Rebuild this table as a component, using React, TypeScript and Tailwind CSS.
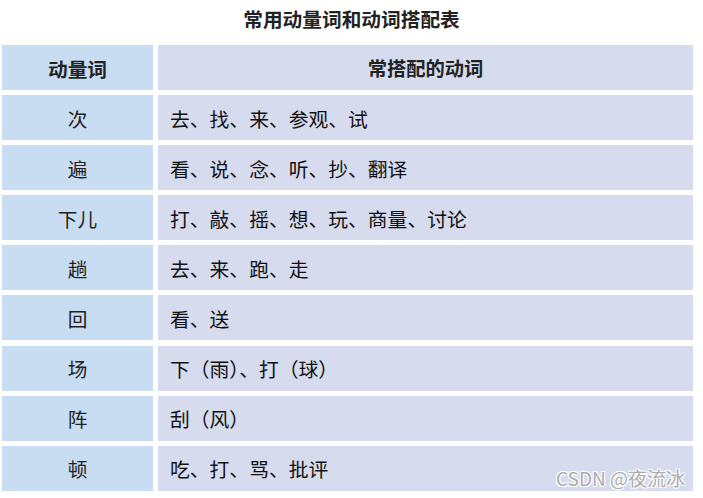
const rows = [
  { measure: '次', verbs: '去、找、来、参观、试' },
  { measure: '遍', verbs: '看、说、念、听、抄、翻译' },
  { measure: '下儿', verbs: '打、敲、摇、想、玩、商量、讨论' },
  { measure: '趟', verbs: '去、来、跑、走' },
  { measure: '回', verbs: '看、送' },
  { measure: '场', verbs: '下（雨）、打（球）' },
  { measure: '阵', verbs: '刮（风）' },
  { measure: '顿', verbs: '吃、打、骂、批评' },
];

const sans = "font-['Noto_Sans_CJK_SC','Noto_Sans',sans-serif]";

export default function App() {
  return (
    <div className={`relative w-[703px] h-[498px] bg-white text-[#1a1a1a] ${sans}`}>
      {/* Title */}
      <div className="h-[45px] pt-[9px] text-center">
        <h1 className="text-[19.7px] leading-none font-bold text-[#222]">常用动量词和动词搭配表</h1>
      </div>

      {/* Table */}
      <div className="pl-[2px] flex flex-col gap-[5.1px]">
        <div className="flex gap-[5px] h-[45px]">
          <div className="w-[151px] bg-[#c9ddf2] flex items-center justify-center pt-[2px]">
            <span className="text-[19.7px] leading-none font-bold text-[#222]">动量词</span>
          </div>
          <div className="w-[535px] bg-[#d6dbee] flex items-center justify-center pt-[2px]">
            <span className="text-[19.3px] leading-none font-bold text-[#222]">常搭配的动词</span>
          </div>
        </div>

        {rows.map((row) => (
          <div key={row.measure} className="flex gap-[5px] h-[45px]">
            <div className="w-[151px] bg-[#c9ddf2] flex items-center justify-center pt-[2px]">
              <span className="text-[19.7px] leading-none text-[#222]">{row.measure}</span>
            </div>
            <div className="w-[535px] bg-[#d6dbee] flex items-center pl-[12px] pt-[2px]">
              <span className="text-[19.8px] leading-none text-[#111]">{row.verbs}</span>
            </div>
          </div>
        ))}
      </div>

      {/* Watermark */}
      <div className="absolute left-[556px] top-[468px] text-[19px] leading-none text-[#ababab] [text-shadow:1px_1px_0_#ffffff,-1px_-1px_0_#ffffff,1px_-1px_0_#ffffff,-1px_1px_0_#ffffff]">
        CSDN @夜流冰
      </div>
    </div>
  );
}
